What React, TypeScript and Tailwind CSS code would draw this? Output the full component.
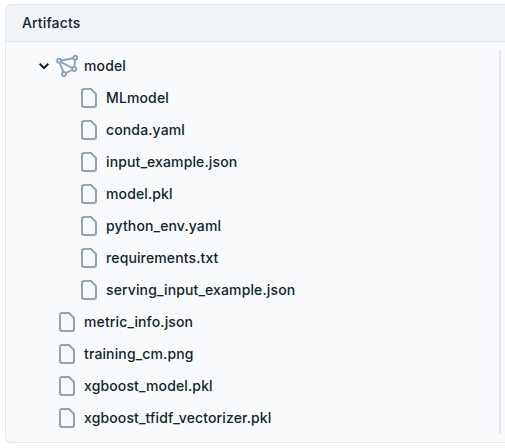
import React from "react";

type Entry = { name: string; kind: "model" | "file"; nested?: boolean };

const entries: Entry[] = [
  { name: "model", kind: "model" },
  { name: "MLmodel", kind: "file", nested: true },
  { name: "conda.yaml", kind: "file", nested: true },
  { name: "input_example.json", kind: "file", nested: true },
  { name: "model.pkl", kind: "file", nested: true },
  { name: "python_env.yaml", kind: "file", nested: true },
  { name: "requirements.txt", kind: "file", nested: true },
  { name: "serving_input_example.json", kind: "file", nested: true },
  { name: "metric_info.json", kind: "file" },
  { name: "training_cm.png", kind: "file" },
  { name: "xgboost_model.pkl", kind: "file" },
  { name: "xgboost_tfidf_vectorizer.pkl", kind: "file" },
];

function FileIcon() {
  return (
    <svg className="block h-6 w-6 shrink-0 text-slate-400" viewBox="0 0 24 24" fill="none" stroke="currentColor" strokeWidth="2" strokeLinejoin="round">
      <path d="M7 3H14L19 8V19A2 2 0 0 1 17 21H7A2 2 0 0 1 5 19V5A2 2 0 0 1 7 3Z" />
    </svg>
  );
}

function ModelIcon() {
  return (
    <svg className="block h-6 w-6 shrink-0 text-slate-400" viewBox="0 0 24 24" fill="none" stroke="currentColor" strokeWidth="1.9">
      <path d="M6 6.5L18 4.2M20 6L19.4 13M17.2 16L10.8 19M8.5 18L4.7 8.9M5.8 7.9L17.2 14" />
      <circle cx="4.1" cy="6.8" r="2" />
      <circle cx="20.2" cy="3.8" r="2" />
      <circle cx="19.2" cy="15" r="2" />
      <circle cx="9" cy="20" r="2" />
    </svg>
  );
}

function Chevron() {
  return (
    <svg className="mr-[5px] block h-3 w-3 shrink-0 text-[#11262b]" viewBox="0 0 12 12" fill="none" stroke="currentColor" strokeWidth="2" strokeLinecap="square">
      <path d="M2.4 4.5L6 8L9.6 4.5" />
    </svg>
  );
}

export default function App() {
  return (
    <div className="h-[448px] w-[505px] overflow-hidden bg-white pl-[5px] pt-1 font-['Inter',sans-serif] text-sm font-medium tracking-[0.13px] text-[#11262b]">
      <section className="flex h-[439px] flex-col overflow-hidden rounded-l-md border border-r-0 border-slate-200 bg-[#f9fafc]">
        <header className="flex h-[37px] shrink-0 items-center border-b border-slate-200 bg-[#f0f3f8] pl-4">Artifacts</header>
        <div className="mr-1 mt-2 h-[384px] border-r-2 border-slate-200">
          {entries.map((entry) => (
            <div key={entry.name} className={entry.nested ? "flex h-8 items-center pl-[71px]" : entry.kind === "model" ? "flex h-8 items-center pl-8" : "flex h-8 items-center pl-[49px]"}>
              {entry.kind === "model" && <Chevron />}
              {entry.kind === "model" ? <ModelIcon /> : <FileIcon />}
              <span className="ml-[5px]">{entry.name}</span>
            </div>
          ))}
        </div>
      </section>
    </div>
  );
}
